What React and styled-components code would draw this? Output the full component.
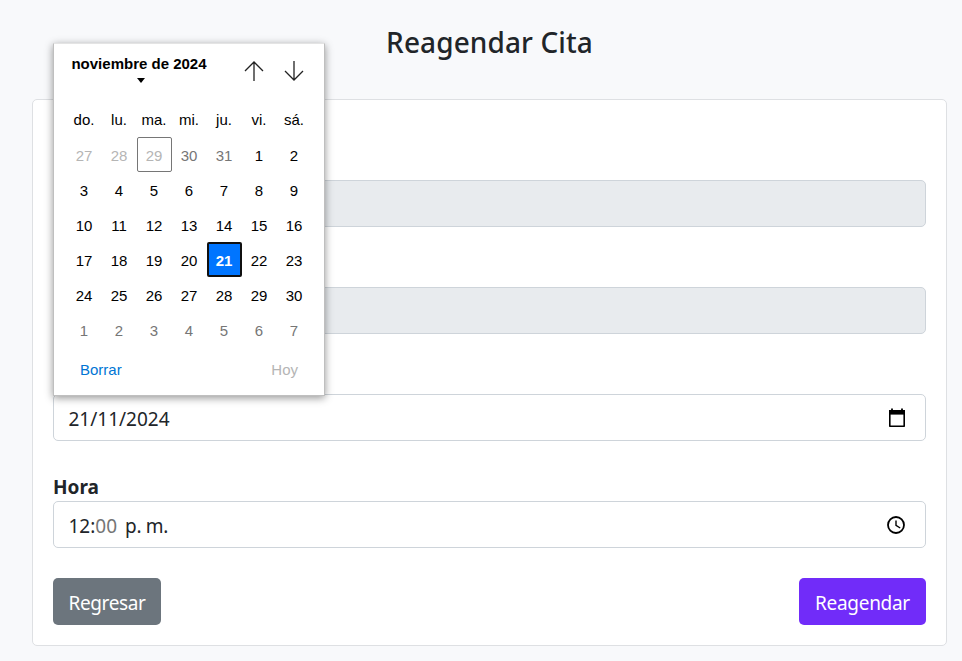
import React from 'react';
import styled, { createGlobalStyle, css } from 'styled-components';

const GlobalStyle = createGlobalStyle`
  *, *::before, *::after { box-sizing: border-box; }
  body {
    margin: 0;
    background: #f8f9fb;
    color: #212529;
    font-family: "Noto Sans", "Open Sans", sans-serif;
    font-size: 19px;
    overflow: hidden;
  }
`;

const Page = styled.main`
  height: 661px;
  padding: 21px 15px 0 32px;
`;

const Title = styled.h1`
  height: 42px;
  margin: 0 0 36px;
  text-align: center;
  font-size: 28px;
  line-height: 42px;
  font-weight: 500;
  letter-spacing: 0.1px;
`;

const Card = styled.section`
  height: 547px;
  padding: 50px 20px 0;
  background: #fff;
  border: 1px solid #dee0e3;
  border-radius: 5px;
`;

const Field = styled.div`
  position: relative;
  margin-bottom: 30px;
`;

const Label = styled.label`
  display: block;
  height: 30px;
  line-height: 32px;
  font-size: 19px;
  font-weight: 700;
`;

const Control = styled.div`
  display: flex;
  align-items: center;
  justify-content: space-between;
  height: 47px;
  padding: 2px 15px 0 14.5px;
  background: ${(p) => (p.$disabled ? '#e8ebee' : '#fff')};
  border: 1px solid #ced4da;
  border-radius: 5px;
  white-space: pre;
`;

const Minutes = styled.span`
  color: #757575;
`;

const Meridiem = styled.span`
  margin-left: 8px;
  letter-spacing: -0.35px;
`;

const ControlIcon = styled.svg`
  width: 24px;
  height: 24px;
  margin: 0 ${(p) => p.$end || '1px'} 2px 0;
  fill: none;
  stroke: #000;
`;

const Actions = styled.div`
  display: flex;
  justify-content: space-between;
`;

const Button = styled.button`
  width: ${(p) => p.$width};
  height: 47px;
  padding: 2px 0 0;
  border: 0;
  border-radius: 5px;
  background: ${(p) => (p.$primary ? '#712cf9' : '#6c757d')};
  color: #fff;
  font: inherit;
  letter-spacing: ${(p) => p.$spacing};
`;

const Popup = styled.div`
  position: absolute;
  left: 0;
  bottom: 45px;
  z-index: 2;
  width: 272px;
  height: 353px;
  padding: 0 17px 0 13px;
  background: #fff;
  border: 1px solid #bfbfbf;
  border-top-color: #e4e4e4;
  box-shadow: 0 2px 8px rgba(0, 0, 0, 0.42);
  color: #000;
  font-family: "Liberation Sans", Arial, sans-serif;
  font-size: 15px;
`;

const PopupHeader = styled.header`
  display: flex;
  height: 58px;
`;

const Month = styled.div`
  display: flex;
  flex-direction: column;
  align-items: center;
  width: 136px;
  margin-left: 4px;
  padding-top: 11px;
  font-weight: 700;
  line-height: 18px;
  white-space: nowrap;
`;

const Caret = styled.svg`
  width: 8px;
  height: 5px;
  margin-top: 5px;
  margin-left: 4px;
`;

const Arrow = styled.svg`
  width: 20px;
  height: 22px;
  margin: 16px 0 0 ${(p) => p.$gap};
  fill: none;
  stroke: #222;
  stroke-width: 1.3;
`;

const Grid = styled.div`
  display: grid;
  grid-template-columns: repeat(7, 35px);
  grid-template-rows: repeat(7, 35px);
`;

const Cell = styled.div`
  display: flex;
  align-items: center;
  justify-content: center;
  padding: ${(p) => (p.$heading ? '0' : '2px')} 1px 0 0;
  color: ${(p) => ({ past: '#b5b5b5', other: '#767676' })[p.$tone] || '#000'};
  ${(p) => p.$today && css`
    border: 1px solid #767676;
    border-radius: 2px;
  `}
  ${(p) => p.$selected && css`
    background: #0075ff;
    border: 2px solid #101010;
    border-radius: 2px;
    color: #fff;
    font-weight: 700;
  `}
`;

const PopupFooter = styled.footer`
  display: flex;
  justify-content: space-between;
  padding: 13px 9px 0 13px;
  line-height: 20px;
`;

const Action = styled.span`
  color: ${(p) => (p.$disabled ? '#b5b5b5' : '#0075d4')};
`;

const WEEKDAYS = ['do.', 'lu.', 'ma.', 'mi.', 'ju.', 'vi.', 'sá.'];

const DAYS = [
  ...[27, 28, 29].map((n) => ({ n, tone: 'past', today: n === 29 })),
  ...[30, 31].map((n) => ({ n, tone: 'other' })),
  ...Array.from({ length: 30 }, (_, i) => ({ n: i + 1, selected: i === 20 })),
  ...Array.from({ length: 7 }, (_, i) => ({ n: i + 1, tone: 'other' })),
];

function DatePopup() {
  return (
    <Popup>
      <PopupHeader>
        <Month>
          noviembre de 2024
          <Caret viewBox="0 0 8 5"><path d="M0 0h8L4 5z" /></Caret>
        </Month>
        <Arrow $gap="37px" viewBox="0 0 20 22"><path d="M10 21V2M1 11l9-9 9 9" /></Arrow>
        <Arrow $gap="20px" viewBox="0 0 20 22"><path d="M10 1v19M1 11l9 9 9-9" /></Arrow>
      </PopupHeader>
      <Grid>
        {WEEKDAYS.map((d) => <Cell key={d} $heading>{d}</Cell>)}
        {DAYS.map((d, i) => (
          <Cell key={i} $tone={d.tone} $today={d.today} $selected={d.selected}>{d.n}</Cell>
        ))}
      </Grid>
      <PopupFooter>
        <Action>Borrar</Action>
        <Action $disabled>Hoy</Action>
      </PopupFooter>
    </Popup>
  );
}

export default function App() {
  return (
    <>
      <GlobalStyle />
      <Page>
        <Title>Reagendar Cita</Title>
        <Card>
          <Field><Label /><Control $disabled /></Field>
          <Field><Label /><Control $disabled /></Field>
          <Field>
            <Label />
            <Control>
              <span>21/11/2024</span>
              <ControlIcon viewBox="0 0 24 24">
                <path d="M4.8 4.8h14.4v15.4H4.8z" strokeWidth="1.6" strokeLinejoin="round" />
                <path d="M4 4h16v4.6H4z" fill="#000" stroke="none" />
                <path d="M7 2.5V5M17 2.5V5" strokeWidth="1.8" />
              </ControlIcon>
            </Control>
            <DatePopup />
          </Field>
          <Field>
            <Label>Hora</Label>
            <Control>
              <span>12:<Minutes>00</Minutes><Meridiem>p. m.</Meridiem></span>
              <ControlIcon $end="2.5px" viewBox="0 0 24 24">
                <circle cx="12" cy="12" r="8" strokeWidth="1.8" />
                <path d="M12 7.5V12.4l4.2 2.6" strokeWidth="1.4" />
              </ControlIcon>
            </Control>
          </Field>
          <Actions>
            <Button $width="108px" $spacing="-0.4px">Regresar</Button>
            <Button $width="127px" $spacing="-0.3px" $primary>Reagendar</Button>
          </Actions>
        </Card>
      </Page>
    </>
  );
}
